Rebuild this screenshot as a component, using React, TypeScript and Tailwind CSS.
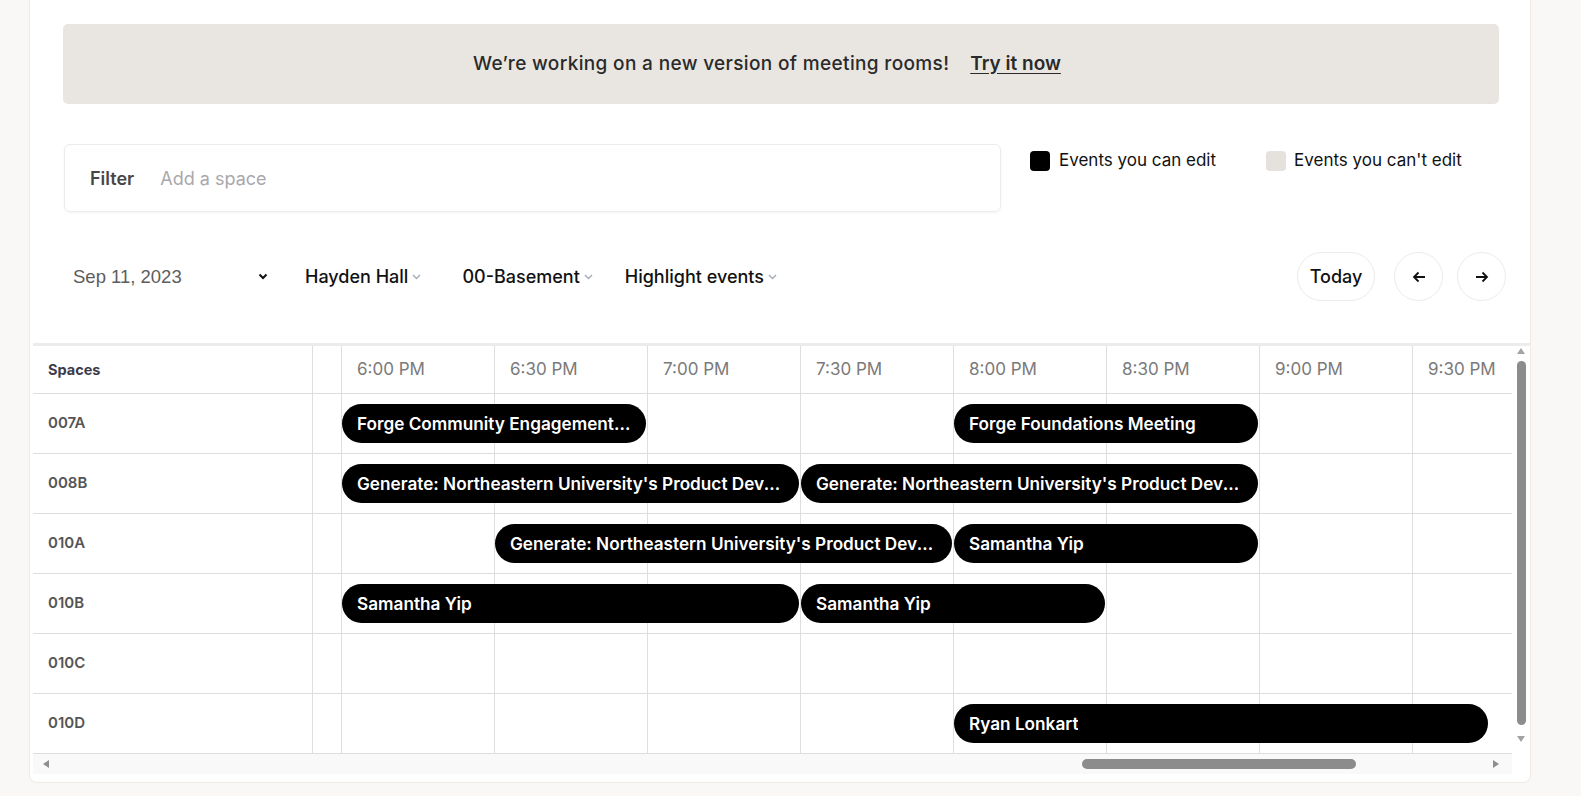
import React from "react";

const times = ["6:00 PM", "6:30 PM", "7:00 PM", "7:30 PM", "8:00 PM", "8:30 PM", "9:00 PM", "9:30 PM"];
const COL = 153;
const OFF = 28;

type Ev = { start: number; span: number; title: string };
const rows: { name: string; events: Ev[] }[] = [
  { name: "007A", events: [
    { start: 0, span: 2, title: "Forge Community Engagement Meeting" },
    { start: 4, span: 2, title: "Forge Foundations Meeting" },
  ] },
  { name: "008B", events: [
    { start: 0, span: 3, title: "Generate: Northeastern University's Product Development Studio" },
    { start: 3, span: 3, title: "Generate: Northeastern University's Product Development Studio" },
  ] },
  { name: "010A", events: [
    { start: 1, span: 3, title: "Generate: Northeastern University's Product Development Studio" },
    { start: 4, span: 2, title: "Samantha Yip" },
  ] },
  { name: "010B", events: [
    { start: 0, span: 3, title: "Samantha Yip" },
    { start: 3, span: 2, title: "Samantha Yip" },
  ] },
  { name: "010C", events: [] },
  { name: "010D", events: [{ start: 4, span: 3.5, title: "Ryan Lonkart" }] },
];

function SmallChevron() {
  return (
    <svg width="9" height="6" viewBox="0 0 9 6" className="ml-[4px] mt-[1px]">
      <path d="M1 1l3.5 3.5L8 1" fill="none" stroke="#a3acb8" strokeWidth="1.4" />
    </svg>
  );
}

export default function App() {
  return (
    <div className="min-h-[796px] w-full bg-[#f9f8f6] font-['Inter',sans-serif] overflow-hidden">
      <div className="ml-[29px] w-[1502px] bg-white border-l border-r border-b border-[#eeebe7] rounded-b-[8px] pb-[8px]">
        {/* Banner */}
        <div className="pt-[24px] pl-[33px] pr-[31px]">
          <div className="h-[80px] bg-[#e9e6e1] rounded-[5px] flex items-center justify-center gap-[21px] pr-[28px] text-[19px] tracking-[0.35px] text-[#2a2a2a] font-medium">
            <span>We’re working on a new version of meeting rooms!</span>
            <span className="underline underline-offset-[3px] font-semibold tracking-normal">Try it now</span>
          </div>
        </div>

        {/* Filter + legend */}
        <div className="mt-[40px] pl-[34px] flex items-start">
          <div className="w-[937px] h-[68px] border border-[#ececec] rounded-[6px] shadow-[0_1px_3px_rgba(0,0,0,0.05)] flex items-center pl-[25px]">
            <span className="text-[18px] font-semibold text-[#4a4646]">Filter</span>
            <span className="ml-[26px] text-[18px] text-[#aaa8ab]">Add a space</span>
          </div>
          <div className="ml-[29px] mt-[4px] flex items-center">
            <span className="w-[20px] h-[20px] rounded-[4px] bg-black" />
            <span className="ml-[9px] text-[17px] text-[#111]">Events you can edit</span>
          </div>
          <div className="ml-[50px] mt-[4px] flex items-center">
            <span className="w-[20px] h-[20px] rounded-[4px] bg-[#e5e2de]" />
            <span className="ml-[8px] text-[17px] text-[#111]">Events you can't edit</span>
          </div>
        </div>

        {/* Date controls */}
        <div className="mt-[40px] flex items-center pr-[24px]">
          <div className="ml-[43px] w-[195px] flex items-center justify-between">
            <span className="font-['Liberation_Sans',sans-serif] text-[18.5px] text-[#5d5d5d]">Sep 11, 2023</span>
            <svg width="10" height="7" viewBox="0 0 10 7">
              <path d="M1.5 1.5L5 5l3.5-3.5" fill="none" stroke="#111" strokeWidth="2" />
            </svg>
          </div>
          <div className="ml-[37px] flex items-center text-[18px] font-medium text-[#111]">
            Hayden Hall<SmallChevron />
          </div>
          <div className="ml-[41px] flex items-center text-[18px] font-medium text-[#111]">
            00-Basement<SmallChevron />
          </div>
          <div className="ml-[32px] flex items-center text-[18px] font-medium text-[#111]">
            Highlight events<SmallChevron />
          </div>
          <div className="ml-auto flex items-center">
            <button className="h-[49px] w-[78px] rounded-full border border-[#ebebeb] text-[18px] font-medium text-[#111]">Today</button>
            <button className="ml-[19px] h-[49px] w-[49px] rounded-full border border-[#ebebeb] flex items-center justify-center">
              <svg width="14" height="12" viewBox="0 0 14 12"><path d="M13 6H2M6.5 1.5L2 6l4.5 4.5" fill="none" stroke="#111" strokeWidth="1.8" /></svg>
            </button>
            <button className="ml-[14px] h-[49px] w-[49px] rounded-full border border-[#ebebeb] flex items-center justify-center">
              <svg width="14" height="12" viewBox="0 0 14 12"><path d="M1 6h11M7.5 1.5L12 6l-4.5 4.5" fill="none" stroke="#111" strokeWidth="1.8" /></svg>
            </button>
          </div>
        </div>

        {/* Grid */}
        <div className="mt-[42px] ml-[3px] border-t-[3px] border-[#ececec] flex flex-col">
          <div className="flex">
            {/* Spaces column */}
            <div className="w-[280px] shrink-0 border-r border-[#dedede]">
              <div className="h-[48px] border-b border-[#dedede] flex items-center pl-[15px] text-[14.5px] font-bold text-[#3b3b4a]">Spaces</div>
              {rows.map((r) => (
                <div key={r.name} className="h-[60px] border-b border-[#dedede] flex items-center pl-[15px] text-[15px] font-semibold text-[#555]">
                  {r.name}
                </div>
              ))}
            </div>
            {/* Timeline */}
            <div className="w-[1199px] overflow-hidden">
              <div className="w-[1400px]">
                <div className="h-[48px] border-b border-[#dedede] flex">
                  <div className="w-[28px] shrink-0" />
                  {times.map((t) => (
                    <div key={t} className="w-[153px] shrink-0 border-l border-[#dedede] flex items-center pl-[15px] text-[17px] text-[#7a7a7a]">{t}</div>
                  ))}
                </div>
                {rows.map((r) => (
                  <div key={r.name} className="relative h-[60px] border-b border-[#dedede] flex">
                    <div className="w-[28px] shrink-0" />
                    {times.map((t) => (
                      <div key={t} className="w-[153px] shrink-0 border-l border-[#dedede]" />
                    ))}
                    {r.events.map((e, i) => (
                      <div
                        key={i}
                        className="absolute top-[10px] h-[39px] rounded-[20px] bg-black text-white text-[17.2px] font-semibold flex items-center pl-[15px] pr-[14px] overflow-hidden"
                        style={{ left: OFF + COL * e.start + 1, width: COL * e.span - 2 }}
                      >
                        <span className="truncate">{e.title}</span>
                      </div>
                    ))}
                  </div>
                ))}
              </div>
            </div>
            {/* Vertical scrollbar */}
            <div className="w-[18px] shrink-0 flex flex-col items-center pt-[1px]">
              <svg width="10" height="8" viewBox="0 0 10 8"><path d="M5 1L9 7H1z" fill="#a3a3a3" /></svg>
              <div className="mt-[6px] w-[9px] h-[364px] rounded-full bg-[#8c8c8c]" />
              <svg className="mt-[10px]" width="10" height="8" viewBox="0 0 10 8"><path d="M1 1h8L5 7z" fill="#a3a3a3" /></svg>
            </div>
          </div>
          {/* Horizontal scrollbar */}
          <div className="flex">
            <div className="w-[1479px] h-[20px] bg-[#f9f9f9] relative flex items-center">
              <svg className="ml-[9px]" width="8" height="10" viewBox="0 0 8 10"><path d="M7 1v8L1 5z" fill="#8f8f8f" /></svg>
              <div className="absolute left-[1049px] top-[5px] w-[274px] h-[10px] rounded-full bg-[#8c8c8c]" />
              <svg className="ml-auto mr-[12px]" width="8" height="10" viewBox="0 0 8 10"><path d="M1 1v8l6-4z" fill="#8f8f8f" /></svg>
            </div>
          </div>
        </div>
      </div>
    </div>
  );
}
